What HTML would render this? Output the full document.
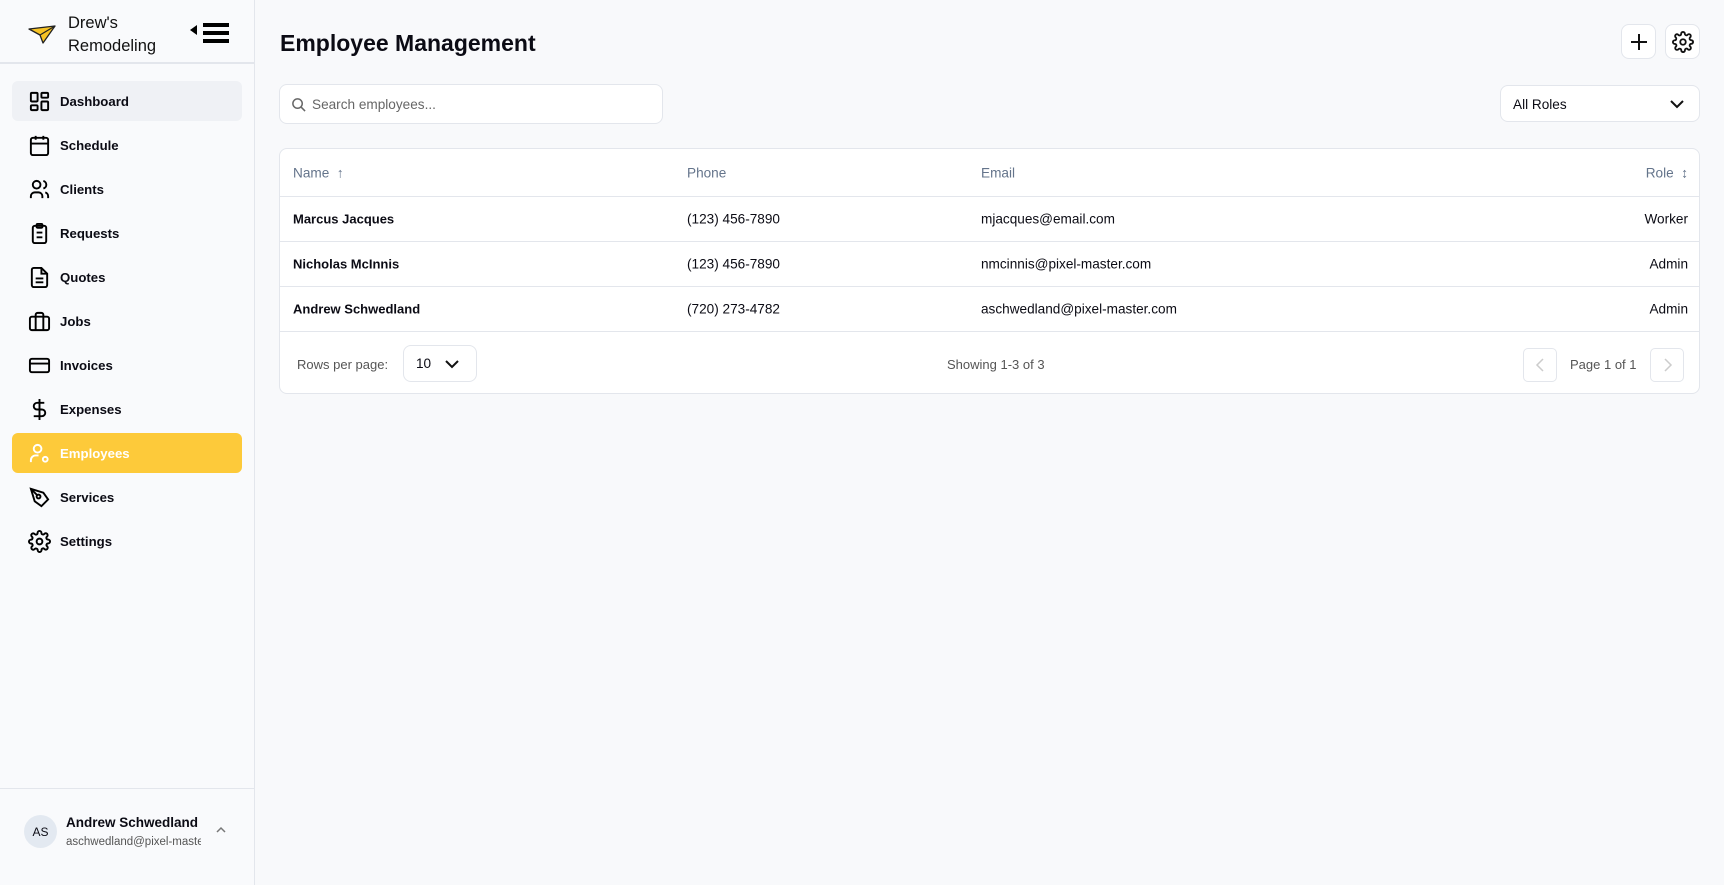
<!DOCTYPE html>
<html><head><meta charset="utf-8"><style>
*{box-sizing:border-box;margin:0;padding:0}
body{width:1724px;height:885px;background:#f8f9fb;font-family:"Liberation Sans",sans-serif;color:#0b0b14;position:relative;overflow:hidden}
.side{position:absolute;left:0;top:0;width:255px;height:885px;border-right:1px solid #e3e6ec;background:#f9fafc}
.brand{position:absolute;left:0;top:0;width:254px;height:64px;border-bottom:2px solid #e3e6ec}
.nav{position:absolute;left:12px;width:230px;height:40px;border-radius:6px;display:flex;align-items:center;font-size:13.2px;font-weight:bold}
.nav svg{position:absolute;left:16px;width:23px;height:23px}
.nav span{position:absolute;left:48px}
.abs{position:absolute}
.btn{position:absolute;width:35px;height:35px;border:1px solid #e3e6ec;border-radius:8px;background:#fff;display:flex;align-items:center;justify-content:center}
.card{position:absolute;left:279px;top:148px;width:1421px;height:246px;background:#fff;border:1px solid #e3e6ec;border-radius:8px}
.row{position:absolute;left:0;right:0;height:45px;border-bottom:1px solid #e3e6ec;font-size:13.6px}
.row div{position:absolute;top:50%;transform:translateY(-50%)}
.row b{font-size:13px}
.hd{color:#64748b;font-size:13.6px}
</style></head><body>
<div class="side">
 <div class="brand">
  <svg class="abs" style="left:28px;top:24px" width="28" height="20" viewBox="0 0 28 20"><path d="M1 5 L27 2 L15 19 L12 11 Z" fill="#f7c325" stroke="#222" stroke-width="1.3" stroke-linejoin="round"/><path d="M12 11 L27 2" stroke="#222" stroke-width="1.2"/></svg>
  <div class="abs" style="left:68px;top:12px;font-size:16.5px;line-height:23px;color:#111">Drew's<br>Remodeling</div>
  <svg class="abs" style="left:190px;top:22px" width="42" height="22" viewBox="0 0 42 22"><path d="M0 8 L7 3 L7 13 Z" fill="#000"/><rect x="13" y="1" width="26" height="4" fill="#000"/><rect x="13" y="9" width="26" height="4" fill="#000"/><rect x="13" y="17" width="26" height="4" fill="#000"/></svg>
 </div>
 <div class="nav" style="top:81px;background:#eff1f5"><svg viewBox="0 0 24 24" fill="none" stroke="#000" stroke-width="2"><rect x="3" y="3" width="7" height="9" rx="1"/><rect x="14" y="3" width="7" height="5" rx="1"/><rect x="14" y="12" width="7" height="9" rx="1"/><rect x="3" y="16" width="7" height="5" rx="1"/></svg><span>Dashboard</span></div>
 <div class="nav" style="top:125px"><svg viewBox="0 0 24 24" fill="none" stroke="#000" stroke-width="2"><rect x="3" y="4" width="18" height="18" rx="2"/><path d="M16 2v4M8 2v4M3 10h18"/></svg><span>Schedule</span></div>
 <div class="nav" style="top:169px"><svg viewBox="0 0 24 24" fill="none" stroke="#000" stroke-width="2"><circle cx="9" cy="7" r="4"/><path d="M3 21v-2a4 4 0 0 1 4-4h4a4 4 0 0 1 4 4v2M16 3.1a4 4 0 0 1 0 7.8M21 21v-2a4 4 0 0 0-3-3.9"/></svg><span>Clients</span></div>
 <div class="nav" style="top:213px"><svg viewBox="0 0 24 24" fill="none" stroke="#000" stroke-width="2"><rect x="5" y="4" width="14" height="18" rx="2"/><rect x="9" y="2" width="6" height="4" rx="1"/><path d="M9 11h6M9 16h6"/></svg><span>Requests</span></div>
 <div class="nav" style="top:257px"><svg viewBox="0 0 24 24" fill="none" stroke="#000" stroke-width="2"><path d="M14 2H6a2 2 0 0 0-2 2v16a2 2 0 0 0 2 2h12a2 2 0 0 0 2-2V8z"/><path d="M14 2v6h6M8 13h8M8 17h8"/></svg><span>Quotes</span></div>
 <div class="nav" style="top:301px"><svg viewBox="0 0 24 24" fill="none" stroke="#000" stroke-width="2"><rect x="2" y="7" width="20" height="14" rx="2"/><path d="M16 21V5a2 2 0 0 0-2-2h-4a2 2 0 0 0-2 2v16"/></svg><span>Jobs</span></div>
 <div class="nav" style="top:345px"><svg viewBox="0 0 24 24" fill="none" stroke="#000" stroke-width="2"><rect x="2" y="5" width="20" height="14" rx="2"/><path d="M2 10h20"/></svg><span>Invoices</span></div>
 <div class="nav" style="top:389px"><svg viewBox="0 0 24 24" fill="none" stroke="#000" stroke-width="2"><path d="M12 1v22M17 5H9.5a3.5 3.5 0 0 0 0 7h5a3.5 3.5 0 0 1 0 7H6"/></svg><span>Expenses</span></div>
 <div class="nav" style="top:433px;background:#fdca3a;color:#fff"><svg viewBox="0 0 24 24" fill="none" stroke="#fff" stroke-width="2"><circle cx="10" cy="7" r="4"/><path d="M3 21v-2a5 5 0 0 1 5-5h3"/><circle cx="18" cy="18" r="2.5"/></svg><span>Employees</span></div>
 <div class="nav" style="top:477px"><svg viewBox="0 0 24 24" fill="none" stroke="#000" stroke-width="2"><path d="M3 3l4 13 7 5 7-7-5-7z"/><circle cx="11" cy="11" r="2"/><path d="M3 3l6.5 6.5"/></svg><span>Services</span></div>
 <div class="nav" style="top:521px"><svg viewBox="0 0 24 24" fill="none" stroke="#000" stroke-width="2"><circle cx="12" cy="12" r="3"/><path d="M19.4 15a1.7 1.7 0 0 0 .3 1.8l.1.1a2 2 0 1 1-2.8 2.8l-.1-.1a1.7 1.7 0 0 0-1.8-.3 1.7 1.7 0 0 0-1 1.5V21a2 2 0 1 1-4 0v-.1a1.7 1.7 0 0 0-1.1-1.5 1.7 1.7 0 0 0-1.8.3l-.1.1a2 2 0 1 1-2.8-2.8l.1-.1a1.7 1.7 0 0 0 .3-1.8 1.7 1.7 0 0 0-1.5-1H3a2 2 0 1 1 0-4h.1a1.7 1.7 0 0 0 1.5-1.1 1.7 1.7 0 0 0-.3-1.8l-.1-.1a2 2 0 1 1 2.8-2.8l.1.1a1.7 1.7 0 0 0 1.8.3H9a1.7 1.7 0 0 0 1-1.5V3a2 2 0 1 1 4 0v.1a1.7 1.7 0 0 0 1 1.5 1.7 1.7 0 0 0 1.8-.3l.1-.1a2 2 0 1 1 2.8 2.8l-.1.1a1.7 1.7 0 0 0-.3 1.8V9a1.7 1.7 0 0 0 1.5 1H21a2 2 0 1 1 0 4h-.1a1.7 1.7 0 0 0-1.5 1z"/></svg><span>Settings</span></div>
 <div class="abs" style="left:0;top:788px;width:254px;border-top:1px solid #e3e6ec"></div>
 <div class="abs" style="left:24px;top:815px;width:33px;height:33px;border-radius:50%;background:#e3e9f1;font-size:12px;display:flex;align-items:center;justify-content:center">AS</div>
 <div class="abs" style="left:66px;top:815px;font-size:13.5px;font-weight:bold">Andrew Schwedland</div>
 <div class="abs" style="left:66px;top:836px;font-size:11.5px;color:#555;width:135px;overflow:hidden;white-space:nowrap">aschwedland@pixel-master.com</div>
 <svg class="abs" style="left:215px;top:826px" width="12" height="8" viewBox="0 0 12 8"><path d="M2 6l4-4 4 4" fill="none" stroke="#777" stroke-width="1.5"/></svg>
</div>

<div class="abs" style="left:280px;top:30px;font-size:23px;font-weight:bold">Employee Management</div>
<div class="btn" style="left:1621px;top:24px"><svg width="20" height="20" viewBox="0 0 20 20"><path d="M10 2v16M2 10h16" stroke="#111" stroke-width="2"/></svg></div>
<div class="btn" style="left:1665px;top:24px"><svg width="22" height="22" viewBox="0 0 24 24" fill="none" stroke="#111" stroke-width="2"><circle cx="12" cy="12" r="3"/><path d="M19.4 15a1.7 1.7 0 0 0 .3 1.8l.1.1a2 2 0 1 1-2.8 2.8l-.1-.1a1.7 1.7 0 0 0-1.8-.3 1.7 1.7 0 0 0-1 1.5V21a2 2 0 1 1-4 0v-.1a1.7 1.7 0 0 0-1.1-1.5 1.7 1.7 0 0 0-1.8.3l-.1.1a2 2 0 1 1-2.8-2.8l.1-.1a1.7 1.7 0 0 0 .3-1.8 1.7 1.7 0 0 0-1.5-1H3a2 2 0 1 1 0-4h.1a1.7 1.7 0 0 0 1.5-1.1 1.7 1.7 0 0 0-.3-1.8l-.1-.1a2 2 0 1 1 2.8-2.8l.1.1a1.7 1.7 0 0 0 1.8.3H9a1.7 1.7 0 0 0 1-1.5V3a2 2 0 1 1 4 0v.1a1.7 1.7 0 0 0 1 1.5 1.7 1.7 0 0 0 1.8-.3l.1-.1a2 2 0 1 1 2.8 2.8l-.1.1a1.7 1.7 0 0 0-.3 1.8V9a1.7 1.7 0 0 0 1.5 1H21a2 2 0 1 1 0 4h-.1a1.7 1.7 0 0 0-1.5 1z"/></svg></div>

<div class="abs" style="left:279px;top:84px;width:384px;height:40px;background:#fff;border:1px solid #e3e6ec;border-radius:8px">
 <svg class="abs" style="left:11px;top:12px" width="15" height="15" viewBox="0 0 16 16" fill="none" stroke="#666" stroke-width="1.6"><circle cx="7" cy="7" r="5"/><path d="M11 11l4 4"/></svg>
 <div class="abs" style="left:32px;top:12px;font-size:13.6px;color:#666">Search employees...</div>
</div>
<div class="abs" style="left:1500px;top:85px;width:200px;height:37px;background:#fff;border:1px solid #e3e6ec;border-radius:8px">
 <div class="abs" style="left:12px;top:11px;font-size:13.6px">All Roles</div>
 <svg class="abs" style="left:168px;top:13px" width="16" height="10" viewBox="0 0 16 10"><path d="M2 2l6 6 6-6" fill="none" stroke="#111" stroke-width="2"/></svg>
</div>

<div class="card">
 <div class="row hd" style="top:0;height:48px"><div style="left:13px">Name &nbsp;↑</div><div style="left:407px">Phone</div><div style="left:701px">Email</div><div style="right:11px">Role &nbsp;↕</div></div>
 <div class="row" style="top:48px"><div style="left:13px"><b>Marcus Jacques</b></div><div style="left:407px">(123) 456-7890</div><div style="left:701px">mjacques@email.com</div><div style="right:11px">Worker</div></div>
 <div class="row" style="top:93px"><div style="left:13px"><b>Nicholas McInnis</b></div><div style="left:407px">(123) 456-7890</div><div style="left:701px">nmcinnis@pixel-master.com</div><div style="right:11px">Admin</div></div>
 <div class="row" style="top:138px"><div style="left:13px"><b>Andrew Schwedland</b></div><div style="left:407px">(720) 273-4782</div><div style="left:701px">aschwedland@pixel-master.com</div><div style="right:11px">Admin</div></div>
 <div class="abs" style="left:17px;top:208px;font-size:13px;color:#555">Rows per page:</div>
 <div class="abs" style="left:123px;top:196px;width:74px;height:37px;border:1px solid #e3e6ec;border-radius:8px">
  <div class="abs" style="left:12px;top:10px;font-size:13.6px">10</div>
  <svg class="abs" style="left:40px;top:13px" width="16" height="10" viewBox="0 0 16 10"><path d="M2 2l6 6 6-6" fill="none" stroke="#111" stroke-width="2"/></svg>
 </div>
 <div class="abs" style="left:667px;top:208px;font-size:13px;color:#555">Showing 1-3 of 3</div>
 <div class="abs" style="left:1243px;top:199px;width:34px;height:34px;border:1px solid #e3e6ec;border-radius:5px"><svg class="abs" style="left:11px;top:9px" width="10" height="14" viewBox="0 0 10 14"><path d="M8 1L2 7l6 6" fill="none" stroke="#ccc" stroke-width="1.5"/></svg></div>
 <div class="abs" style="left:1290px;top:208px;font-size:13px;color:#555">Page 1 of 1</div>
 <div class="abs" style="left:1370px;top:199px;width:34px;height:34px;border:1px solid #e3e6ec;border-radius:5px"><svg class="abs" style="left:12px;top:9px" width="10" height="14" viewBox="0 0 10 14"><path d="M2 1l6 6-6 6" fill="none" stroke="#ccc" stroke-width="1.5"/></svg></div>
</div>
</body></html>
